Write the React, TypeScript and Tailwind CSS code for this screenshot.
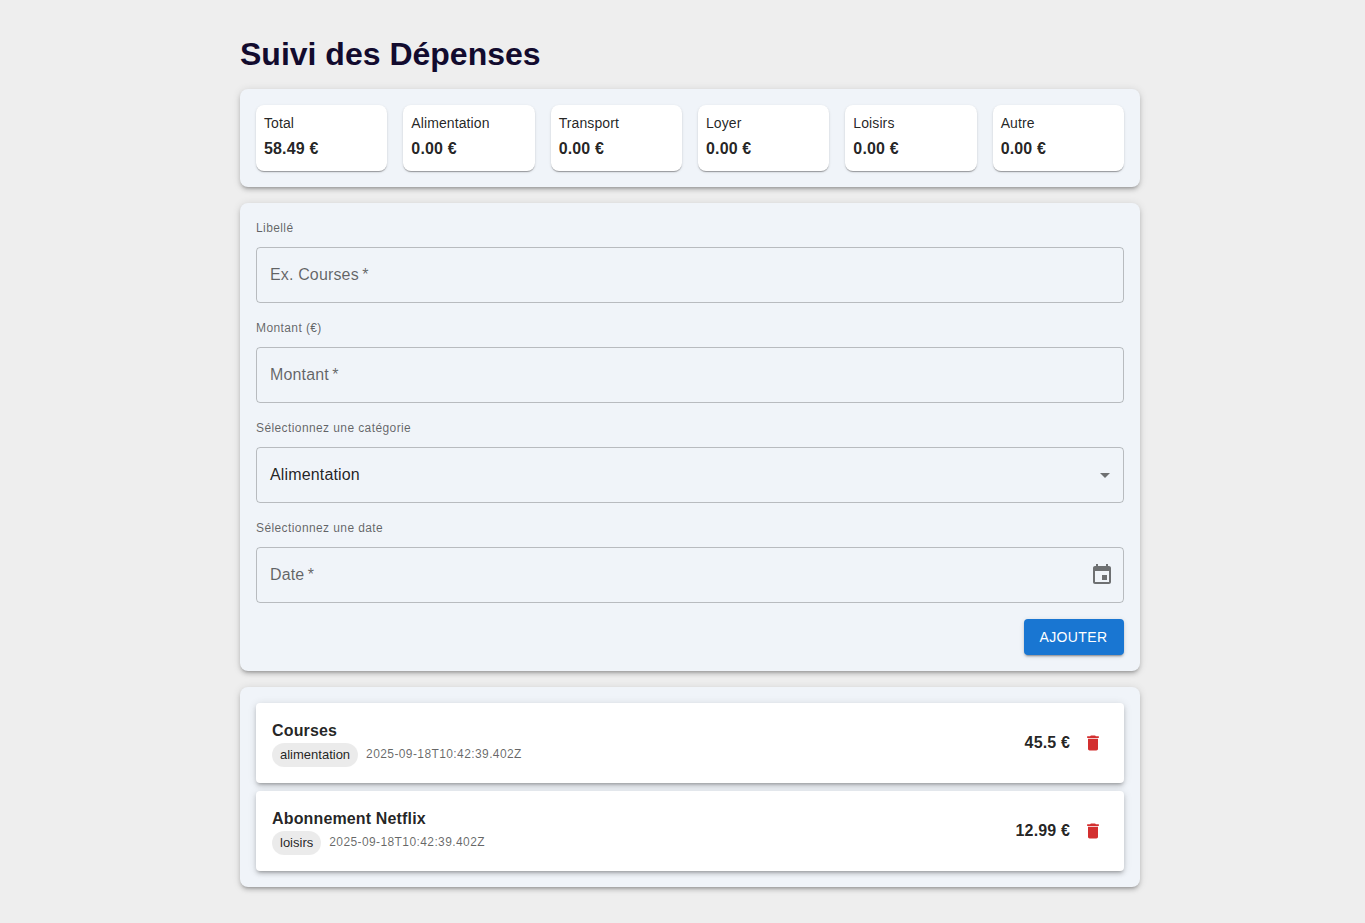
import React from 'react';

const totals = [
  { label: 'Total', value: '58.49 €' },
  { label: 'Alimentation', value: '0.00 €' },
  { label: 'Transport', value: '0.00 €' },
  { label: 'Loyer', value: '0.00 €' },
  { label: 'Loisirs', value: '0.00 €' },
  { label: 'Autre', value: '0.00 €' },
];

const expenses = [
  { title: 'Courses', category: 'alimentation', date: '2025-09-18T10:42:39.402Z', amount: '45.5 €' },
  { title: 'Abonnement Netflix', category: 'loisirs', date: '2025-09-18T10:42:39.402Z', amount: '12.99 €' },
];

const panel =
  'rounded-lg bg-[#f0f4f9] p-4 shadow-[0_3px_3px_-2px_rgba(0,0,0,0.2),0_3px_4px_0_rgba(0,0,0,0.14),0_1px_8px_0_rgba(0,0,0,0.12)]';

function Icon({ path, className }: { path: string; className: string }) {
  return (
    <svg viewBox="0 0 24 24" fill="currentColor" className={className} aria-hidden="true">
      <path d={path} />
    </svg>
  );
}

function Field({ label, children }: { label: string; children: React.ReactNode }) {
  return (
    <div className="flex flex-col">
      <span className="mb-2.5 text-xs leading-[18px] tracking-[0.03333em] text-black/60">{label}</span>
      <div className="flex h-14 items-center justify-between rounded border border-black/23 pl-[13px] text-base tracking-[0.00938em] text-black/60">
        {children}
      </div>
    </div>
  );
}

export default function App() {
  return (
    <div className="min-h-screen bg-[#eeeeee] pt-8 pb-9 font-['Liberation_Sans',Arial,sans-serif] text-black/87">
      <main className="ml-[240px] flex w-[900px] flex-col gap-4">
        <h1 className="-mb-[3px] h-11 text-[32px] leading-[44px] font-bold text-[#120b2e]">
          Suivi des Dépenses
        </h1>

        <section className={`${panel} grid grid-cols-6 gap-4`}>
          {totals.map((t) => (
            <div
              key={t.label}
              className="rounded-lg bg-white p-2 shadow-[0_2px_1px_-1px_rgba(0,0,0,0.2),0_1px_1px_0_rgba(0,0,0,0.14),0_1px_3px_0_rgba(0,0,0,0.12)]"
            >
              <div className="mb-0.5 text-sm leading-5 tracking-[0.00714em]">{t.label}</div>
              <div className="text-base leading-7 font-bold tracking-[0.00938em]">{t.value}</div>
            </div>
          ))}
        </section>

        <section className={`${panel} flex flex-col gap-4`}>
          <Field label="Libellé">
            <span>Ex. Courses&thinsp;*</span>
          </Field>
          <Field label="Montant (€)">
            <span>Montant&thinsp;*</span>
          </Field>
          <Field label="Sélectionnez une catégorie">
            <span className="text-black/87">Alimentation</span>
            <Icon path="M7 10l5 5 5-5z" className="mr-1.5 size-6 text-black/54" />
          </Field>
          <Field label="Sélectionnez une date">
            <span>Date&thinsp;*</span>
            <Icon
              path="M17 12h-5v5h5v-5zM16 1v2H8V1H6v2H5c-1.11 0-1.99.9-1.99 2L3 19c0 1.1.89 2 2 2h14c1.1 0 2-.9 2-2V5c0-1.1-.9-2-2-2h-1V1h-2zm3 18H5V8h14v11z"
              className="mr-[9px] size-6 text-black/54"
            />
          </Field>
          <button className="h-9 w-[100px] self-end rounded bg-[#1976d2] pr-px text-sm font-medium tracking-[0.02857em] text-white shadow-[0_3px_1px_-2px_rgba(0,0,0,0.2),0_2px_2px_0_rgba(0,0,0,0.14),0_1px_5px_0_rgba(0,0,0,0.12)]">
            AJOUTER
          </button>
        </section>

        <section className={`${panel} flex flex-col gap-2`}>
          {expenses.map((e) => (
            <div
              key={e.title}
              className="flex h-20 items-center justify-between rounded bg-white p-4 shadow-[0_3px_3px_-2px_rgba(0,0,0,0.2),0_3px_4px_0_rgba(0,0,0,0.14),0_1px_8px_0_rgba(0,0,0,0.12)]"
            >
              <div>
                <div className="text-base leading-6 font-bold tracking-[0.00938em]">{e.title}</div>
                <div className="flex items-start gap-2">
                  <span className="h-6 rounded-full bg-black/8 px-2 text-[13px] leading-6">{e.category}</span>
                  <span className="text-xs leading-[22px] tracking-[0.03333em] text-black/60">{e.date}</span>
                </div>
              </div>
              <div className="flex items-center gap-2">
                <span className="text-base leading-6 font-bold tracking-[0.00938em]">{e.amount}</span>
                <button aria-label="Supprimer" className="p-[5px] text-[#d32f2f]">
                  <Icon
                    path="M6 19c0 1.1.9 2 2 2h8c1.1 0 2-.9 2-2V7H6zM19 4h-3.5l-1-1h-5l-1 1H5v2h14z"
                    className="size-5"
                  />
                </button>
              </div>
            </div>
          ))}
        </section>
      </main>
    </div>
  );
}
